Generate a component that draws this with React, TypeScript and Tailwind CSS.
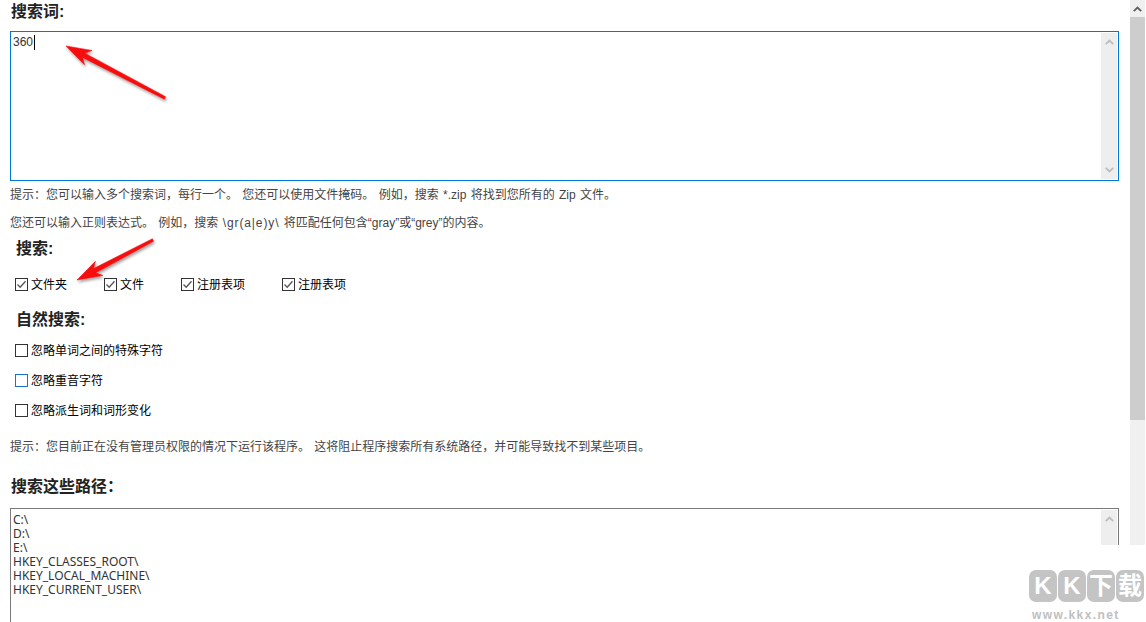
const font = "font-['Liberation_Sans','Noto_Sans_CJK_SC',sans-serif]";

function ChevronUp({ className }: { className: string }) {
  return (
    <svg width="9" height="6" viewBox="0 0 9 6" className={className} fill="none" stroke="currentColor" strokeWidth="1.8">
      <path d="M0.8 5.2 L4.5 1.5 L8.2 5.2" />
    </svg>
  );
}

function ChevronDown({ className }: { className: string }) {
  return (
    <svg width="9" height="6" viewBox="0 0 9 6" className={className} fill="none" stroke="currentColor" strokeWidth="1.8">
      <path d="M0.8 0.8 L4.5 4.5 L8.2 0.8" />
    </svg>
  );
}

function InnerScrollbar() {
  return (
    <div className="flex w-[16px] shrink-0 flex-col items-center justify-between bg-[#eeeeee] py-[6px]">
      <ChevronUp className="text-[#bdbdbd]" />
      <ChevronDown className="text-[#bdbdbd]" />
    </div>
  );
}

function Check({ checked, focused, label }: { checked?: boolean; focused?: boolean; label: string }) {
  return (
    <label className="flex items-center gap-[3px] text-[12px] leading-[16px] text-black">
      <span
        className={`mb-[2px] flex h-[13px] w-[13px] items-center justify-center border bg-white ${
          focused ? "border-[#1a73c5]" : "border-[#333333]"
        }`}
      >
        {checked && (
          <svg width="11" height="11" viewBox="0 0 11 11" fill="none" stroke="#555555" strokeWidth="1.3">
            <path d="M1.5 5.5 L4.2 8.2 L9.5 2.2" />
          </svg>
        )}
      </span>
      {label}
    </label>
  );
}

function Arrow({ className, w, h, x1, y1, x2, y2 }: { className: string; w: number; h: number; x1: number; y1: number; x2: number; y2: number }) {
  // tail (x1,y1) to tip (x2,y2), head drawn around the tip
  const a = Math.atan2(y2 - y1, x2 - x1);
  const len = Math.hypot(x2 - x1, y2 - y1);
  const pt = (d: number, o: number) => {
    const px = x2 - d * Math.cos(a) - o * Math.sin(a);
    const py = y2 - d * Math.sin(a) + o * Math.cos(a);
    return `${px.toFixed(1)},${py.toFixed(1)}`;
  };
  return (
    <svg width={w} height={h} viewBox={`0 0 ${w} ${h}`} className={className}>
      <defs>
        <filter id="arrow-shadow" x="-20%" y="-20%" width="150%" height="160%">
          <feDropShadow dx="1" dy="2" stdDeviation="1.6" floodColor="#000000" floodOpacity="0.4" />
        </filter>
      </defs>
      <g filter="url(#arrow-shadow)">
        <polygon
          points={`${pt(len, -1.3)} ${pt(20, -2.4)} ${pt(25, -8)} ${x2},${y2} ${pt(25, 8)} ${pt(20, 2.4)} ${pt(len, 1.3)}`}
          fill="#f60f0f"
          stroke="#f60f0f"
          strokeWidth="0.6"
          strokeLinejoin="round"
        />
      </g>
    </svg>
  );
}

export default function App() {
  return (
    <div className={`relative flex h-[622px] w-[1146px] items-start overflow-hidden bg-white ${font}`}>
      <div className="flex w-[1130px] shrink-0 flex-col pl-[10px] pr-[11px]">
        <h2 className="ml-[1px] h-[31px] pt-[3px] text-[16px] leading-[18px] font-bold text-[#222222]">搜索词:</h2>

        <div className="flex h-[150px] justify-between border border-[#0078d7] p-[1px] pl-[2px]">
          <div className="flex h-[18px] items-center text-[12px] leading-[18px] text-[#333333]">
            360<span className="ml-[1px] h-[15px] w-[1px] bg-black" />
          </div>
          <InnerScrollbar />
        </div>

        <p className="mt-[5px] text-[12px] leading-[18px] text-[#444444] [word-spacing:1px]">
          提示：您可以输入多个搜索词，每行一个。 您还可以使用文件掩码。 例如，搜索 *.zip 将找到您所有的 Zip 文件。
        </p>
        <p className="mt-[10px] text-[12px] leading-[18px] text-[#444444] [word-spacing:1px]">
          您还可以输入正则表达式。 例如，搜索 <span className="tracking-[0.9px]">\gr(a|e)y\</span> 将匹配任何包含“gray”或“grey”的内容。
        </p>

        <h3 className="mt-[8px] ml-[6px] text-[16px] leading-[18px] font-bold text-[#222222]">搜索:</h3>
        <div className="mt-[19px] ml-[5px] flex h-[16px] items-center">
          <div className="w-[89px]"><Check checked label="文件夹" /></div>
          <div className="w-[77px]"><Check checked label="文件" /></div>
          <div className="w-[101px]"><Check checked label="注册表项" /></div>
          <Check checked label="注册表项" />
        </div>

        <h3 className="mt-[18px] ml-[6px] text-[16px] leading-[18px] font-bold text-[#222222]">自然搜索:</h3>
        <div className="mt-[14px] ml-[5px] flex flex-col gap-[14px]">
          <Check label="忽略单词之间的特殊字符" />
          <Check focused label="忽略重音字符" />
          <Check label="忽略派生词和词形变化" />
        </div>

        <p className="mt-[19px] text-[12px] leading-[18px] text-[#444444] [word-spacing:1px]">
          提示：您目前正在没有管理员权限的情况下运行该程序。 这将阻止程序搜索所有系统路径，并可能导致找不到某些项目。
        </p>

        <h2 className="mt-[22px] ml-[1px] text-[16px] leading-[18px] font-bold text-[#222222]">搜索这些路径：</h2>

        <div className="mt-[12px] flex h-[140px] justify-between border border-[#7a7a7a] p-[1px] pl-[2px]">
          <div className="pt-[3px] font-['Noto_Sans',sans-serif] text-[12px] leading-[14px] text-[#333333]">
            <div>C:\</div>
            <div>D:\</div>
            <div>E:\</div>
            <div>HKEY_CLASSES_ROOT\</div>
            <div>HKEY_LOCAL_MACHINE\</div>
            <div>HKEY_CURRENT_USER\</div>
          </div>
          <div className="flex w-[16px] shrink-0 flex-col items-center bg-[#eeeeee] pt-[6px]">
            <ChevronUp className="text-[#bdbdbd]" />
          </div>
        </div>
      </div>

      {/* page scrollbar */}
      <div className="flex h-[545px] w-[15px] shrink-0 flex-col bg-[#f0f0f0]">
        <div className="flex h-[17px] items-center justify-center">
          <ChevronUp className="text-[#606060]" />
        </div>
        <div className="h-[403px] bg-[#cdcdcd]" />
      </div>

      {/* watermark sits over the screenshot corner */}
      <div className="absolute top-[545px] left-[1000px] h-[77px] w-[146px] bg-white pt-[25px] pl-[29px]">
        <div className="flex gap-[1px]">
          {["K", "K", "下", "载"].map((c, i) => (
            <span
              key={i}
              className="flex h-[32px] w-[28px] items-center justify-center rounded-[7px] bg-[#c4c4c4] text-[24px] leading-none font-bold text-white"
            >
              {c}
            </span>
          ))}
        </div>
        <div className="mt-[8px] ml-[3px] text-[12px] leading-[11px] font-bold tracking-[1.4px] text-[#c0c0c0]">
          www.kkx.net
        </div>
      </div>

      <Arrow className="absolute top-[40px] left-[60px]" w={115} h={70} x1={105} y1={58} x2={6} y2={6} />
      <Arrow className="absolute top-[235px] left-[72px]" w={90} h={55} x1={81} y1={5} x2={5} y2={45} />
    </div>
  );
}
